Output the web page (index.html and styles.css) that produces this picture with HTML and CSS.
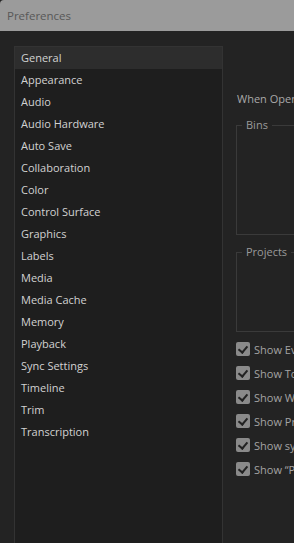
FILE: index.html
```html
<!DOCTYPE html>
<html lang="en">

<head>
    <meta charset="UTF-8">
    <meta name="viewport" content="width=device-width, initial-scale=1.0">
    <title>Preferences</title>
    <link rel="stylesheet" href="styles.css">
</head>

<body>
    <!-- title bar -->
    <div class="titlebar">Preferences</div>

    <div class="window">
        <!-- category list -->
        <div class="sidebar">
            <a href="#" class="active">General</a>
            <a href="#">Appearance</a>
            <a href="#">Audio</a>
            <a href="#">Audio Hardware</a>
            <a href="#">Auto Save</a>
            <a href="#">Collaboration</a>
            <a href="#">Color</a>
            <a href="#">Control Surface</a>
            <a href="#">Graphics</a>
            <a href="#">Labels</a>
            <a href="#">Media</a>
            <a href="#">Media Cache</a>
            <a href="#">Memory</a>
            <a href="#">Playback</a>
            <a href="#">Sync Settings</a>
            <a href="#">Timeline</a>
            <a href="#">Trim</a>
            <a href="#">Transcription</a>
        </div>

        <!-- general settings -->
        <div class="content">
            <div class="row-label">When Opening a Project: Show Open dialog</div>

            <fieldset class="group group-bins">
                <legend>Bins</legend>
            </fieldset>

            <fieldset class="group group-projects">
                <legend>Projects</legend>
            </fieldset>

            <div class="checks">
                <label class="check"><span class="box"></span>Show Events Indicator</label>
                <label class="check"><span class="box"></span>Show Tool Tips</label>
                <label class="check"><span class="box"></span>Show What's New on launch</label>
                <label class="check"><span class="box"></span>Show Premiere Pro news</label>
                <label class="check"><span class="box"></span>Show system compatibility issues</label>
                <label class="check"><span class="box"></span>Show “Paste Attributes” dialog</label>
            </div>
        </div>
    </div>
</body>

</html>
```
FILE: styles.css
```css
body {
    font-family: "Open Sans", "Noto Sans", sans-serif;
    font-size: 11px;
    margin: 0;
    padding: 0;
    background-color: #232323;
    overflow: hidden;
    height: 543px;
}

.titlebar {
    height: 31px;
    line-height: 31px;
    padding-left: 7px;
    background-color: #9b9b9b;
    color: #585858;
    font-size: 11.5px;
    border-top-left-radius: 4px;
}

.window {
    display: flex;
    align-items: flex-start;
    padding: 15px 0 0 14px;
    width: 700px;
}

.sidebar {
    width: 207px;
    height: 520px;
    flex-shrink: 0;
    background-color: #1e1e1e;
    border: 1px solid #333333;
    border-bottom: none;
}

.sidebar a {
    display: block;
    height: 22px;
    line-height: 22px;
    padding-left: 6px;
    color: #d2d2d2;
    text-decoration: none;
}

.sidebar a.active {
    background-color: #2d2d2d;
}

.content {
    padding: 45px 0 0 13px;
    width: 420px;
}

.row-label {
    color: #a9a9a9;
    line-height: 16px;
    padding-left: 1px;
    white-space: nowrap;
}

/* group boxes */
.group {
    margin: 10px 0 0 0;
    padding: 0;
    border: 1px solid #3a3a3a;
    min-width: 0;
}

.group legend {
    margin-left: 5px;
    padding: 0 4px;
    line-height: 16px;
    color: #9a9a9a;
}

.group-bins {
    height: 116px;
}

.group-projects {
    margin-top: 9px;
    height: 86px;
}

.checks {
    display: flex;
    flex-direction: column;
    margin-top: 5px;
}

.check {
    display: flex;
    align-items: center;
    gap: 4px;
    height: 24px;
    color: #a3a3a3;
    white-space: nowrap;
}

.box {
    width: 14px;
    height: 14px;
    border-radius: 2px;
    background-color: #8a8a8a;
    position: relative;
}

.box::after {
    content: "";
    position: absolute;
    left: 4px;
    top: 2px;
    width: 4px;
    height: 7px;
    border: solid #222222;
    border-width: 0 2px 2px 0;
    transform: rotate(40deg);
}
```
